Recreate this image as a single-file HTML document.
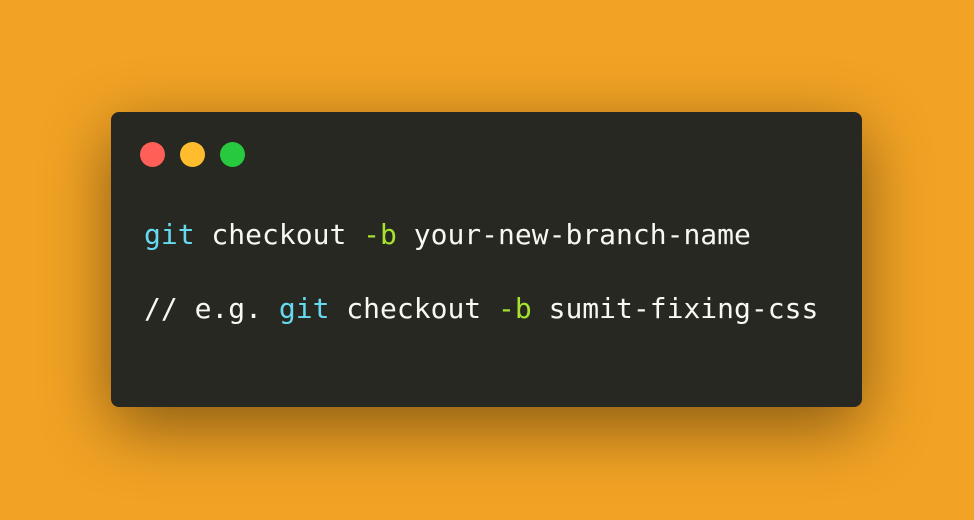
<!DOCTYPE html>
<html><head><meta charset="utf-8"><style>
html,body{margin:0;padding:0;width:974px;height:520px;overflow:hidden;background:#F2A324;}
.win{position:absolute;left:111px;top:112px;width:751px;height:295px;background:#272822;border-radius:8px;box-shadow:0 20px 68px rgba(0,0,0,0.45);}
.dot{position:absolute;top:30px;width:25px;height:25px;border-radius:50%;}
pre{position:absolute;left:33px;top:104px;margin:0;font-family:"DejaVu Sans Mono","Liberation Mono",monospace;font-size:28px;line-height:37px;color:#F8F8F2;}
.c{color:#66D9EF}.g{color:#A6E22E}
</style></head><body>
<div class="win">
<div class="dot" style="left:29px;background:#FF5F56"></div>
<div class="dot" style="left:69px;background:#FFBD2E"></div>
<div class="dot" style="left:109px;background:#27C93F"></div>
<pre><span class="c">git</span> checkout <span class="g">-b</span> your-new-branch-name

// e.g. <span class="c">git</span> checkout <span class="g">-b</span> sumit-fixing-css</pre>
</div>
</body></html>
